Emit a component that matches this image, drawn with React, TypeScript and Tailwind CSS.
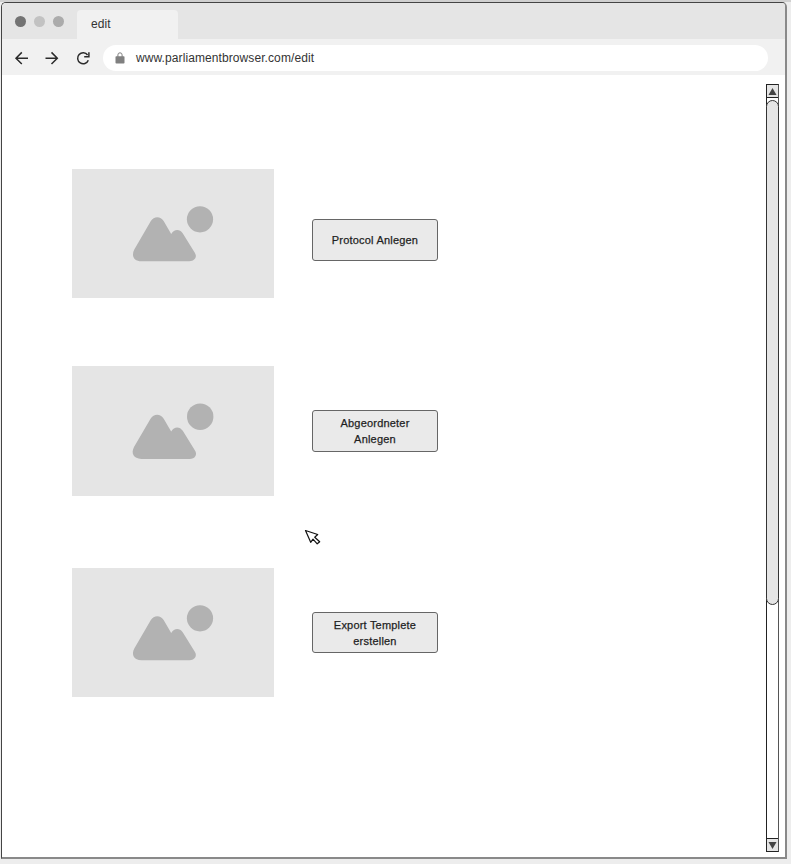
const FONT = 'font-["Liberation_Sans",Arial,sans-serif]';

function Placeholder({ className }: { className: string }) {
  return (
    <svg className={`block shrink-0 bg-[#e5e5e5] ${className}`} viewBox="0 0 202 129" preserveAspectRatio="xMidYMin slice" fill="#b2b2b2">
      <circle cx="128" cy="50.3" r="13.1" />
      <path d="M62.3 80.5L78.7 52.3C82 47 88.5 47 91.8 52.3L99.2 65C102 60 107.500 59.500 110.700 64.300L122.800 83.800C125.500 88 122.800 92.200 117.500 92.200H69.500C62 92.200 59 87 62.300 80.500Z" />
    </svg>
  );
}

function Action({ lines, className }: { lines: string[]; className: string }) {
  return (
    <button className={`flex w-[126px] shrink-0 flex-col items-center justify-center rounded-[3px] border border-[#666] bg-[#eaeaea] text-[11px] leading-4 tracking-[0.2px] text-[#1f1f1f] [-webkit-text-stroke:0.25px_#1f1f1f] ${className}`}>
      {lines.map((line) => (
        <span key={line} className="whitespace-nowrap">{line}</span>
      ))}
    </button>
  );
}

export default function App() {
  return (
    <div className={`h-[864px] w-[791px] overflow-hidden border-t-2 border-[#d0d0d0] bg-[#ededed] pl-px ${FONT}`}>
      <div className="flex h-[857px] w-[786px] flex-col overflow-hidden rounded-t-[5px] border-t border-r-2 border-b-2 border-l border-t-[#444] border-r-[#898989] border-b-[#898989] border-l-[#444] bg-white">
        <div className="flex h-9 shrink-0 items-end bg-[#e5e5e5] pl-3">
          <div className="flex w-[63px] gap-2 self-start pt-[13px] pl-[0.5px]">
            <span className="size-[11px] rounded-full bg-[#737373]" />
            <span className="size-[11px] rounded-full bg-[#c2c2c2]" />
            <span className="size-[11px] rounded-full bg-[#ababab]" />
          </div>
          <div className="flex h-[29px] w-[101px] items-center rounded-t-[4px] bg-[#f1f1f1] pb-0.5 pl-3.5 text-xs tracking-[0.1px] text-[#333]">edit</div>
        </div>
        <div className="flex h-9 shrink-0 items-center bg-[#f1f1f1] pl-3">
          <svg className="h-9 w-[89px] shrink-0" viewBox="0 0 89 36" fill="none" stroke="#2b2b2b" strokeWidth="1.5">
            <path d="M14 19.200H2.200M7.800 13.400L2 19.200L7.800 25" />
            <path d="M31.500 19.200H43.300M37.500 13.400L43.300 19.200L37.500 25" />
            <path d="M73.600 16A5.500 5.500 0 1 0 74.300 21.200" />
            <path d="M74.900 13.200V17.700H70.200" />
          </svg>
          <div className="mt-0.5 flex h-[26px] w-[665px] items-center rounded-full bg-white pl-3 text-xs tracking-[0.09px] text-[#333]">
            <svg className="mr-[11px] h-3 w-2.5 shrink-0" viewBox="0 0 10 12">
              <path d="M2.900 5V2.900A2.100 2.100 0 0 1 7.100 2.900V5" fill="none" stroke="#808080" strokeWidth="1" />
              <rect x="0.500" y="4.300" width="9" height="7.200" rx="0.800" fill="#808080" />
            </svg>
            www.parliamentbrowser.com/edit
          </div>
        </div>
        <div className="flex min-h-0 flex-1 justify-between">
          <main className="pt-[94px] pl-[70px]">
            <div className="flex h-[197px] items-start">
              <Placeholder className="h-[129px] w-[202px]" />
              <Action className="mt-[50px] ml-[38px] h-[42px]" lines={["Protocol Anlegen"]} />
            </div>
            <div className="flex h-[202px] items-start">
              <Placeholder className="h-[130px] w-[202px]" />
              <div className="ml-[30px] pt-11">
                <Action className="ml-2 h-[42px]" lines={["Abgeordneter", "Anlegen"]} />
                <svg className="mt-[77px] h-[18px] w-5" viewBox="0 0 20 18" fill="#fff" stroke="#111" strokeWidth="1.200">
                  <path d="M1.500 1.500L13.700 5.500L10.700 8.200L15.700 12.700L13.200 14.800L9 10.200L6.700 13.300Z" strokeLinejoin="round" />
                </svg>
              </div>
            </div>
            <div className="flex items-start">
              <Placeholder className="h-[129px] w-[202px]" />
              <Action className="mt-11 ml-[38px] h-[41px]" lines={["Export Templete", "erstellen"]} />
            </div>
          </main>
          <div className="mt-[9px] mr-[6px] flex h-[768px] w-[13px] flex-col border border-[#222] border-r-[#555] bg-white">
            <div className="flex h-[13px] shrink-0 items-center justify-center border-b border-[#222] bg-[#e5e5e5]">
              <svg className="h-[7px] w-[9px]" viewBox="0 0 9 7"><path d="M4.500 0L8.500 7H0.500Z" fill="#444" /></svg>
            </div>
            <div className="-mx-px mt-0.5 h-[505px] shrink-0 rounded-full border border-[#333] bg-[#e5e5e5]" />
            <div className="mt-auto flex h-[13px] shrink-0 items-center justify-center border-t border-[#222] bg-[#e5e5e5]">
              <svg className="h-[7px] w-[9px]" viewBox="0 0 9 7"><path d="M0.500 0H8.500L4.500 7Z" fill="#444" /></svg>
            </div>
          </div>
        </div>
      </div>
    </div>
  );
}
